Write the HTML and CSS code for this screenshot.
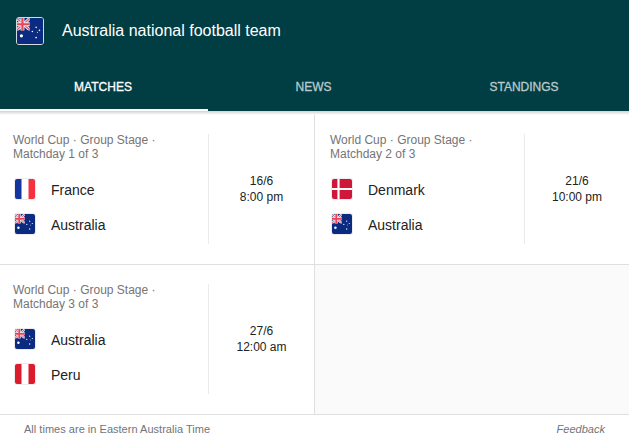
FILE: index.html
```html
<!DOCTYPE html>
<html lang="en">
<head>
    <meta charset="UTF-8">
    <meta name="viewport" content="width=device-width, initial-scale=1.0">
    <title>Australia national football team</title>
    <link rel="stylesheet" href="styles.css">
</head>
<body>
    <!-- flags, reused below -->
    <svg class="defs">
        <symbol id="australia" viewBox="0 0 20 20">
            <rect width="20" height="20" fill="#0a2b80"/>
            <svg width="9.8" height="9.6">
                <path d="M-2 -1.5L10.5 9.8M-2 11L10.5 -.3" stroke="#ececf3" stroke-width="2.4"/>
                <path d="M-2 -1.5L10.5 9.8M-2 11L10.5 -.3" stroke="#e2596a" stroke-width="1"/>
                <path d="M0 4.8H10M4.2 0V10" stroke="#f4eef2" stroke-width="3"/>
                <path d="M0 4.8H10M4.2 0V10" stroke="#ea4356" stroke-width="1.7"/>
            </svg>
            <g fill="#fff">
                <circle cx="3.4" cy="13.7" r="1.25"/>
                <circle cx="14.7" cy="7.2" r=".6"/>
                <circle cx="11.8" cy="10.4" r=".6"/>
                <circle cx="17.3" cy="9.5" r=".6"/>
                <circle cx="15.7" cy="11" r=".4"/>
                <circle cx="14.7" cy="15" r=".65"/>
            </g>
        </symbol>
        <symbol id="france" viewBox="0 0 20 20">
            <rect width="20" height="20" fill="#fff"/>
            <rect width="6.5" height="20" fill="#1435a0"/>
            <rect x="13.5" width="6.5" height="20" fill="#f4323f"/>
        </symbol>
        <symbol id="denmark" viewBox="0 0 20 20">
            <rect width="20" height="20" fill="#ce1739"/>
            <path d="M0 10H20M6.5 0V20" stroke="#fff" stroke-width="2.2"/>
        </symbol>
        <symbol id="peru" viewBox="0 0 20 20">
            <rect width="20" height="20" fill="#fff"/>
            <rect width="6.5" height="20" fill="#dc1b2c"/>
            <rect x="13.5" width="6.5" height="20" fill="#dc1b2c"/>
        </symbol>
    </svg>

    <div class="header">
        <div class="title">
            <svg class="logo"><use href="#australia"/></svg>
            <h1>Australia national football team</h1>
        </div>
        <div class="tabs">
            <div class="tab active">MATCHES</div>
            <div class="tab">NEWS</div>
            <div class="tab">STANDINGS</div>
        </div>
    </div>
    <div class="shadow"></div>

    <div class="matches">
        <div class="match">
            <div class="info">
                <div class="stage">World Cup · Group Stage ·<br>Matchday 1 of 3</div>
                <div class="team"><svg class="flag"><use href="#france"/></svg><span>France</span></div>
                <div class="team"><svg class="flag"><use href="#australia"/></svg><span>Australia</span></div>
            </div>
            <div class="time">16/6<br>8:00 pm</div>
        </div>
        <div class="match right">
            <div class="info">
                <div class="stage">World Cup · Group Stage ·<br>Matchday 2 of 3</div>
                <div class="team"><svg class="flag"><use href="#denmark"/></svg><span>Denmark</span></div>
                <div class="team"><svg class="flag"><use href="#australia"/></svg><span>Australia</span></div>
            </div>
            <div class="time">21/6<br>10:00 pm</div>
        </div>
        <div class="match">
            <div class="info">
                <div class="stage">World Cup · Group Stage ·<br>Matchday 3 of 3</div>
                <div class="team"><svg class="flag"><use href="#australia"/></svg><span>Australia</span></div>
                <div class="team"><svg class="flag"><use href="#peru"/></svg><span>Peru</span></div>
            </div>
            <div class="time">27/6<br>12:00 am</div>
        </div>
        <div class="match right empty"></div>
    </div>

    <div class="footer">
        <span>All times are in Eastern Australia Time</span>
        <span class="feedback">Feedback</span>
    </div>
</body>
</html>
```

FILE: styles.css
```css
* {
    box-sizing: border-box;
}
body {
    margin: 0;
    background: #fff;
    color: #222;
    font-family: "Liberation Sans", Arial, sans-serif;
    height: 444px;
    overflow: hidden;
}
.defs {
    display: none;
}
.header {
    background: #013e44;
    color: #fff;
    height: 111px;
}
.title {
    display: flex;
    align-items: center;
    height: 62px;
    padding-left: 16px;
}
.title h1 {
    margin: 0 0 0 18px;
    font-size: 16px;
    font-weight: normal;
}
.logo {
    width: 28px;
    height: 28px;
    border: 1px solid #d5dadd;
    border-radius: 3px;
}
.tabs {
    display: grid;
    grid-template-columns: 208px 211px 210px;
    height: 49px;
}
.tab {
    padding-top: 17px;
    font-size: 12px;
    line-height: 16px;
    text-align: center;
    color: #b9cacc;
    -webkit-text-stroke: 0.3px;
}
.tab.active {
    color: #fff;
    padding-right: 2px;
    border-bottom: 2px solid #fff;
}
.shadow {
    height: 4px;
    background: linear-gradient(#d2d2d2, #fff);
}
.matches {
    display: grid;
    grid-template-columns: 315px 314px;
    grid-template-rows: 150px 150px;
}
.match {
    display: flex;
    padding: 19px 0 20px 13px;
    border-right: 1px solid #dfdfdf;
    border-bottom: 1px solid #dfdfdf;
}
.match.right {
    padding-left: 15px;
    border-right: none;
}
.match.empty {
    background: #fafafa;
}
.info {
    width: 196px;
    border-right: 1px solid #ebebeb;
}
.match.right .info {
    width: 195px;
}
.stage {
    margin: -1px 0 11px;
    font-size: 12px;
    line-height: 14px;
    color: #757575;
}
.team {
    display: flex;
    align-items: center;
    height: 35px;
    padding-left: 2px;
    font-size: 14px;
}
.team span {
    margin-left: 16px;
}
.flag {
    width: 20px;
    height: 20px;
    margin-bottom: 2px;
    border-radius: 2px;
    box-shadow: 0 0 0 1px #ececec;
}
.time {
    flex: 1;
    padding-top: 39px;
    font-size: 12px;
    line-height: 16px;
    text-align: center;
}
.footer {
    display: flex;
    justify-content: space-between;
    padding: 7px 24px 0;
    font-size: 11px;
    line-height: 14px;
    letter-spacing: 0.02px;
    color: #70757a;
}
.feedback {
    font-style: italic;
}
```
